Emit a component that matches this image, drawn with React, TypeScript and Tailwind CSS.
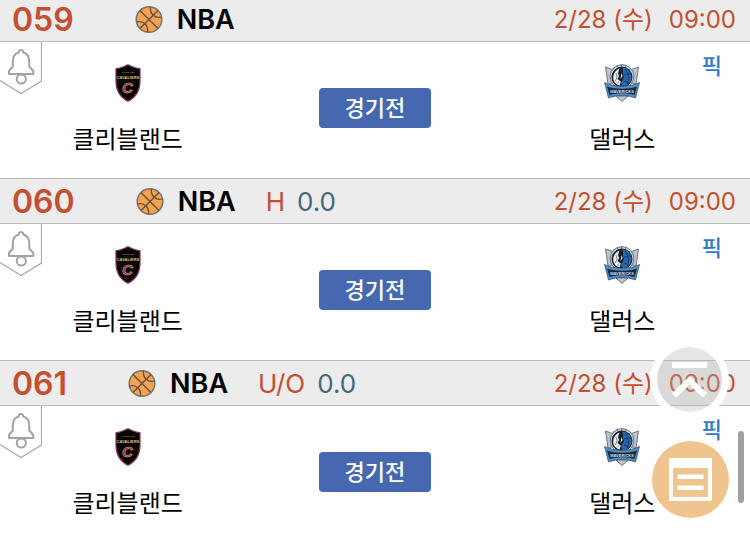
interface Game {
  id: string;
  league: string;
  betType?: string;
  line?: string;
  date: string;
  time: string;
  status: string;
}

const games: Game[] = [
  { id: "059", league: "NBA", date: "2/28 (수)", time: "09:00", status: "경기전" },
  { id: "060", league: "NBA", betType: "H", line: "0.0", date: "2/28 (수)", time: "09:00", status: "경기전" },
  { id: "061", league: "NBA", betType: "U/O", line: "0.0", date: "2/28 (수)", time: "09:00", status: "경기전" },
];

function Basketball() {
  return (
    <svg viewBox="0 0 28 28" className="size-7 shrink-0" fill="none" aria-hidden="true">
      <circle cx="14" cy="13.500" r="12.800" fill="#f6a250" stroke="#77746d" strokeWidth="1.500" />
      <g stroke="#5b5145" strokeWidth="1.300">
        <path d="M5 4.500 23 22.500M23 4.500 5 22.500" />
        <path d="M15.500 1C14.500 7 19.500 13 26.500 11" />
        <path d="M1.500 16C8.500 14 13.500 20 12.500 26" />
      </g>
    </svg>
  );
}

function CavaliersLogo() {
  return (
    <svg viewBox="0 0 26 38" className="h-[38px] w-[26px]" role="img" aria-label="Cavaliers">
      <path
        d="M13 .7C9.500 2.600 5.500 4 1 4.800V17C1 27 5.500 33.500 13 37.300 20.500 33.500 25 27 25 17V4.800C20.500 4 16.500 2.600 13 .7Z"
        fill="#050505"
        stroke="#85334b"
        strokeWidth="1.200"
      />
      <text x="13" y="9" textAnchor="middle" fill="#a98d5b" className="font-['Liberation_Sans_Narrow','Liberation_Sans',sans-serif] text-[2px] font-bold">
        CLEVELAND
      </text>
      <text x="13" y="15" textAnchor="middle" fill="#dcc086" className="font-['Liberation_Sans_Narrow','Liberation_Sans',sans-serif] text-[4px] font-bold">
        CAVALIERS
      </text>
      <text
        x="12.500"
        y="29"
        textAnchor="middle"
        fill="#a12048"
        stroke="#d2b074"
        strokeWidth=".6"
        className="font-['Liberation_Sans',sans-serif] text-[15px] font-bold italic"
      >
        C
      </text>
    </svg>
  );
}

function MavericksLogo() {
  return (
    <svg viewBox="0 0 36 38" className="h-[38px] w-9" role="img" aria-label="Mavericks">
      <path d="M1.500 3 10 6 7 20H4ZM34.500 3 26 6 29 20H32ZM12 32 18 37.500 24 32Z" fill="#bdc5cc" stroke="#5b6974" strokeWidth=".9" />
      <circle cx="18" cy="12.500" r="11.900" fill="#cfd5d9" stroke="#4d5b68" strokeWidth=".8" />
      <path d="M9 5 10.500 3M13 1.500 14 3.500M17.500 .8V2.800M22 1.500 21.300 3.500M26.500 4.500 25 6" stroke="#53616e" strokeWidth=".9" />
      <circle cx="18" cy="13" r="10" fill="#2866ae" stroke="#12263b" strokeWidth="1" />
      <path d="M18 3C20 7 18 10 20 13L17 19 19 22.500C11.500 23.500 8 18 8 13 8 7 12.500 3 18 3Z" fill="#17212c" />
      <path d="M15.500 4.500C10.500 6.500 8.500 11 9.500 16 10.500 19 12.500 20.500 15.500 21.500L16.800 17.500 13.500 15 15 12 14 9ZM17.500 9 18.500 12 16.500 15Z" fill="#edf0f1" />
      <path d="M12 9 13 13 11.500 17M14.500 17.500 13.500 19.500" stroke="#65717a" strokeWidth=".8" fill="none" />
      <path d="M21 5C24 8 25.500 14 23.500 20M20 11C23 9.500 26 9.500 27.500 11M20 17 25 19" stroke="#143965" strokeWidth="1" fill="none" />
      <path d="M.5 18.500C10 23.500 26 23.500 35.500 18.500L33.500 26 31.500 34C22 30.500 14 30.500 4.500 34L2.500 26Z" fill="#508fcb" stroke="#36536d" strokeWidth=".8" />
      <path d="M3 22.500C12 25.500 24 25.500 33 22.500L30.500 31C22 28.500 14 28.500 5.500 31Z" fill="#1b2a3a" />
      <text x="18" y="28.500" textAnchor="middle" fill="#d3dde5" className="font-['Liberation_Sans_Narrow','Liberation_Sans',sans-serif] text-[4px] font-bold">
        MAVERICKS
      </text>
    </svg>
  );
}

function AlertButton() {
  return (
    <button type="button" aria-label="알림" className="absolute left-0 top-0">
      <svg viewBox="0 0 42 53" className="h-[53px] w-[42px]" fill="none">
        <path d="M41.500 0V39L21 51.500 0 38.500" stroke="#a9a9a9" strokeWidth="1.200" />
        <path
          d="M21 8C22.500 8 23.400 9 23.300 10.500 27.500 11.500 29.300 15 29.300 20V24.500L33.300 29V32H9V29L12.800 24.500V20C12.800 15 14.500 11.500 18.700 10.500 18.600 9 19.500 8 21 8Z"
          stroke="#a3a3a3"
          strokeWidth="2"
          strokeLinejoin="round"
        />
        <circle cx="21.300" cy="37" r="4.600" fill="white" stroke="#a3a3a3" strokeWidth="2" />
      </svg>
    </button>
  );
}

function GameRow({ game }: { game: Game }) {
  return (
    <article>
      <header className="flex h-[46px] items-center border-y border-[#bcbcbc] bg-[#ececec] pl-3 pr-3.5 pt-0.5">
        <span className="text-[32px] font-semibold leading-10 text-[#c44f31]">{game.id}</span>
        <div className="ml-[61px] flex items-center gap-3.5">
          <Basketball />
          <h2 className="text-[27px] font-semibold leading-10">{game.league}</h2>
        </div>
        {game.betType && (
          <p className="ml-[30px] flex gap-3 text-[26px] font-normal leading-10">
            <span className="text-[#c44f31]">{game.betType}</span>
            <span className="text-[#46677b]">{game.line}</span>
          </p>
        )}
        <time className="ml-auto flex gap-4 text-[24px] leading-10 text-[#c44f31]">
          <span>{game.date}</span>
          <span>{game.time}</span>
        </time>
      </header>
      <div className="relative grid h-[136px] grid-cols-3 px-1">
        <AlertButton />
        <div className="flex flex-col items-center pt-[22px]">
          <CavaliersLogo />
          <span className="mt-5 text-[24px] leading-9">클리블랜드</span>
        </div>
        <div className="flex flex-col items-center pt-[46px]">
          <span className="flex h-10 w-28 items-center justify-center rounded bg-[#4668b0] text-[22px] font-medium text-white">
            {game.status}
          </span>
        </div>
        <div className="flex flex-col items-center pt-[22px]">
          <MavericksLogo />
          <span className="mt-5 text-[24px] leading-9">댈러스</span>
        </div>
        <a href="#pick" className="absolute right-7 top-1.5 text-[22px] font-medium leading-9 text-[#337ac8]">
          픽
        </a>
      </div>
    </article>
  );
}

export default function App() {
  return (
    <div className="h-screen overflow-hidden bg-white font-['Inter','Noto_Sans_CJK_KR',sans-serif] text-black">
      <main className="-mt-1">
        {games.map((game) => (
          <GameRow key={game.id} game={game} />
        ))}
      </main>

      <button
        type="button"
        aria-label="맨 위로"
        className="fixed bottom-[115px] right-5 size-20 rounded-full"
      >
        <svg viewBox="0 0 80 80" className="size-20" fill="none">
          <circle cx="39.500" cy="39.500" r="32.500" fill="#b0b0b0" fillOpacity=".32" />
          <circle cx="39.500" cy="39.500" r="36" stroke="white" strokeWidth="7" />
          <path d="M22 25H57M24 55.500 39.500 40.500 55 55.500" stroke="white" strokeWidth="6" />
        </svg>
      </button>
      <button
        type="button"
        aria-label="목록"
        className="fixed bottom-[17px] right-[21px] size-[77px] rounded-full bg-[#efc48e]"
      >
        <svg viewBox="0 0 77 77" className="size-[77px]">
          <path d="M17 17H60V60H17Z" fill="white" />
          <path d="M21 27H56V56H21Z" fill="#efc48e" />
          <path d="M25.500 33.500H51.500V38H25.500ZM25.500 44.500H51.500V49H25.500Z" fill="white" />
        </svg>
      </button>
      <div className="fixed bottom-8 right-1.5 h-[72px] w-1.5 rounded-full bg-[#a0a0a0]" />
    </div>
  );
}
